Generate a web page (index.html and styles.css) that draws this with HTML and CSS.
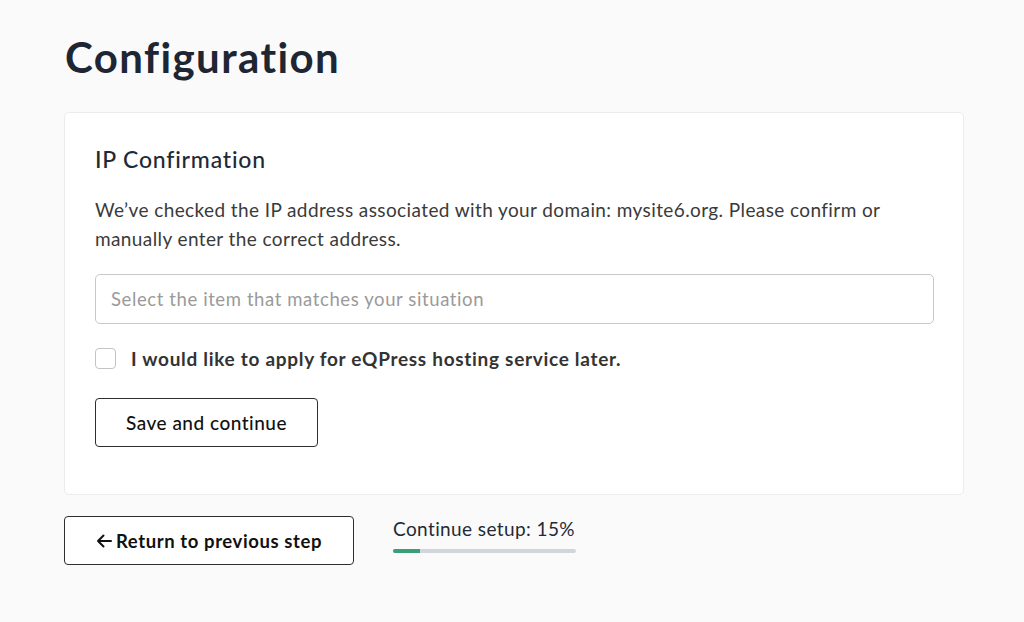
FILE: index.html
```html
<!DOCTYPE html>
<html lang="en">
<head>
    <meta charset="UTF-8">
    <meta name="viewport" content="width=device-width, initial-scale=1.0">
    <title>Configuration</title>
<link rel="stylesheet" href="styles.css">
</head>
<body>

<div id="wrapper">
    <h1 class="page-title">Configuration</h1>

    <div class="card">
        <h2 class="card-title">IP Confirmation</h2>
        <p class="card-text">We’ve checked the IP address associated with your domain: mysite6.org. Please confirm or manually enter the correct address.</p>

        <div class="select-box">Select the item that matches your situation</div>

        <label class="check-row">
            <span class="check-box"></span>
            <span class="check-label">I would like to apply for eQPress hosting service later.</span>
        </label>

        <button class="btn btn-save" type="button">Save and continue</button>
    </div>

    <div class="footer-row">
        <button class="btn btn-back" type="button">
            <svg class="arrow" width="16" height="14" viewBox="0 0 16 14"><path d="M15 7H2M7.5 1.5L2 7l5.5 5.5" fill="none" stroke="#111" stroke-width="2" stroke-linecap="round" stroke-linejoin="round"/></svg>Return to previous step
        </button>
        <div class="progress">
            <div class="progress-label">Continue setup: 15%</div>
            <div class="progress-track"><div class="progress-fill" style="width: 15%"></div></div>
        </div>
    </div>
</div>

</body>
</html>
```

FILE: styles.css
```css
html, body {
    margin: 0;
    padding: 0;
    background-color: #FAFAFA;
}
body {
    font-family: "Lato", "Noto Sans", sans-serif;
    color: #333;
}
#wrapper {
    width: 900px;
    margin: 0 0 0 64px;
    padding-top: 31px;
}
.page-title {
    margin: 0 0 29px 1px;
    font-size: 42px;
    line-height: 52px;
    font-weight: 700;
    letter-spacing: 1.4px;
    color: #1E2533;
}
.card {
    background-color: #FFF;
    border: 1px solid #ECECEC;
    border-radius: 5px;
    padding: 32px 29px 47px 30px;
}
.card-title {
    margin: 0 0 21px 0;
    font-size: 23px;
    line-height: 29px;
    font-weight: 500;
    letter-spacing: 0.8px;
    color: #1F2A37;
}
.card-text {
    margin: 0 0 21px 0;
    font-size: 19px;
    line-height: 29px;
    letter-spacing: 0.4px;
    color: #3A3A3A;
}
.select-box {
    height: 48px;
    line-height: 48px;
    border: 1px solid #C8C8C8;
    border-radius: 5px;
    padding-left: 15px;
    font-size: 18.5px;
    letter-spacing: 0.6px;
    color: #9A9A9A;
}
.check-row {
    display: flex;
    align-items: center;
    margin-top: 23px;
    cursor: pointer;
}
.check-box {
    width: 19px;
    height: 19px;
    border: 1px solid #C4C4C4;
    border-radius: 4px;
    background-color: #FFF;
}
.check-label {
    margin-left: 15px;
    font-size: 19px;
    font-weight: 700;
    letter-spacing: 0.7px;
    color: #333;
}
.btn {
    display: flex;
    align-items: center;
    justify-content: center;
    background-color: #FFF;
    border: 1px solid #2E2E2E;
    border-radius: 4px;
    font-family: "Lato", "Noto Sans", sans-serif;
    font-size: 19px;
    color: #111;
    cursor: pointer;
}
.btn-save {
    margin-top: 28px;
    width: 223px;
    height: 49px;
    font-weight: 500;
    letter-spacing: 0.5px;
}
.footer-row {
    display: flex;
    align-items: flex-start;
    margin-top: 21px;
}
.btn-back {
    width: 290px;
    height: 49px;
    font-weight: 700;
    font-size: 18.5px;
    letter-spacing: 0.6px;
}
.btn-back .arrow {
    margin-right: 4px;
}
.progress {
    margin-left: 39px;
    width: 183px;
}
.progress-label {
    font-size: 19px;
    line-height: 26px;
    letter-spacing: 0.4px;
    white-space: nowrap;
    color: #1F2A37;
}
.progress-track {
    margin-top: 7px;
    height: 4px;
    border-radius: 2px;
    background-color: #D2D6DB;
    overflow: hidden;
}
.progress-fill {
    height: 100%;
    background-color: #3A9E78;
}
```
